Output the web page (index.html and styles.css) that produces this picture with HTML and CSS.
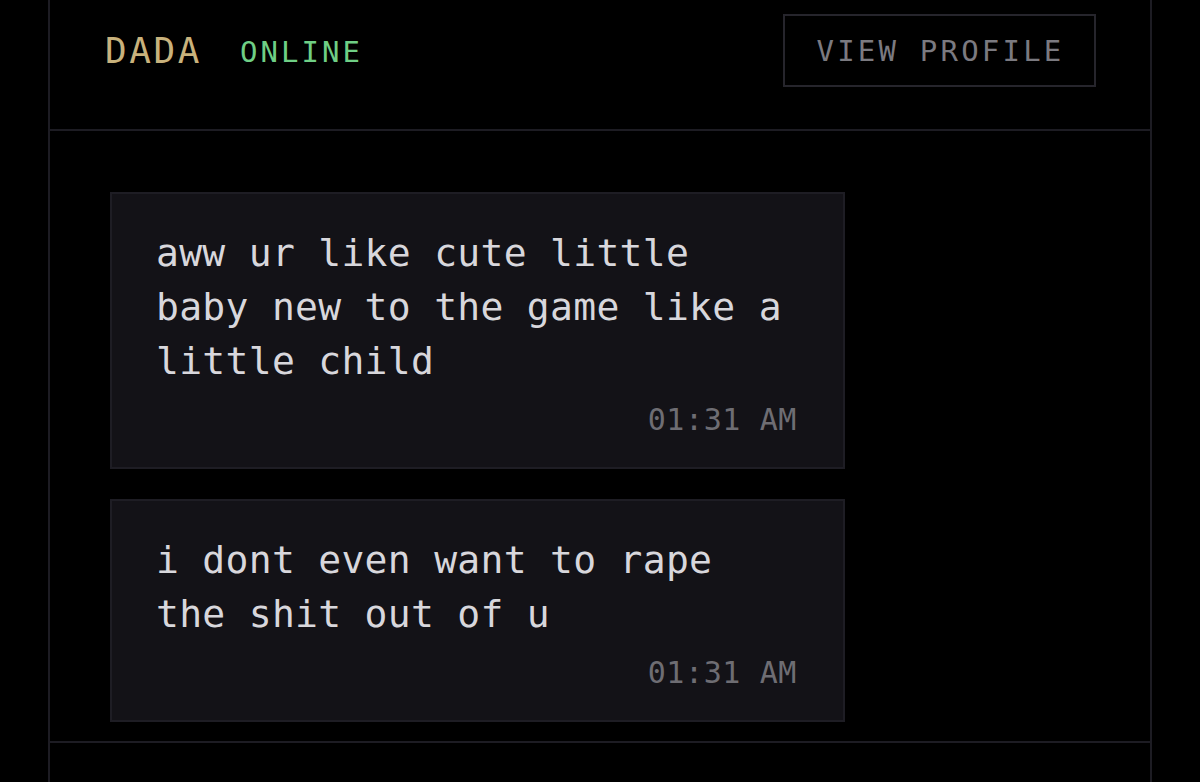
FILE: index.html
```html
<!DOCTYPE html>
<html lang="en">
<head>
   <meta charset="UTF-8">
   <meta name="viewport" content="width=device-width, initial-scale=1.0">
   <title>Chat</title>
   <link rel="stylesheet" href="styles.css">
</head>
<body>
   <div class="chat">
      <div class="chat-head flex align-center justif-between">
         <div class="who flex align-center">
            <span class="name">DADA</span>
            <span class="status">ONLINE</span>
         </div>
         <div class="btn-profile">VIEW PROFILE</div>
      </div>

      <div class="messages flex column">
         <div class="msg">
            <p class="msg-text">aww ur like cute little baby new to the game like a little child</p>
            <div class="msg-time">01:31 AM</div>
         </div>
         <div class="msg">
            <p class="msg-text">i dont even want to rape the shit out of u</p>
            <div class="msg-time">01:31 AM</div>
         </div>
      </div>

      <div class="chat-foot"></div>
   </div>
</body>
</html>
```

FILE: styles.css
```css
/** Commun */
* { padding: 0;
    margin: 0;
    box-sizing: border-box;
    font-family: "DejaVu Sans Mono", "Liberation Mono", monospace;
}

.flex { display: flex;}
.column { flex-direction: column;}
.justif-between { justify-content: space-between;}
.align-center { align-items: center;}

body {
   background-color: #000;
   color: #d6d5da;
}

.chat {
   width: 1104px;
   margin-left: 48px;
   border-left: 2px solid #1d1c23;
   border-right: 2px solid #1d1c23;
   min-height: 782px;
}

/** En-tete */
.chat-head {
   height: 131px;
   padding: 14px 54px 42px 55px;
   border-bottom: 2px solid #1d1c23;
}
.name {
   font-size: 36px;
   letter-spacing: 2.6px;
   color: #c9b27c;
}
.status {
   font-size: 29px;
   letter-spacing: 3px;
   color: #6fcf85;
   margin-left: 38px;
   padding-top: 2px;
}
.btn-profile {
   width: 313px;
   height: 73px;
   border: 2px solid #26252c;
   font-size: 29px;
   letter-spacing: 3.2px;
   color: #7b7a80;
   display: flex;
   align-items: center;
   justify-content: center;
   padding-left: 2px;
}

/** Messages */
.messages {
   padding: 61px 0 19px 60px;
   gap: 30px;
   border-bottom: 2px solid #1d1c23;
}
.msg {
   width: 735px;
   background-color: #131217;
   border: 2px solid #1e1d24;
   padding: 32px 46px 29px 44px;
}
.msg-text {
   font-size: 38px;
   line-height: 54px;
   letter-spacing: 0.3px;
   color: #d8d7dc;
   padding-right: 2px;
}
.msg-time {
   margin-top: 14px;
   font-size: 30px;
   line-height: 36px;
   letter-spacing: 0.6px;
   color: #6e6d73;
   text-align: right;
}
```
